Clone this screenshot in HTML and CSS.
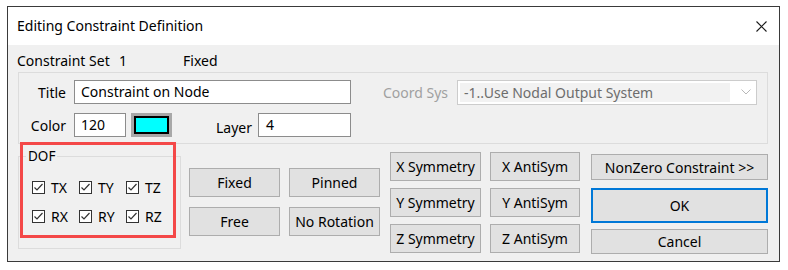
FILE: index.html
```html
<!DOCTYPE html>
<html>
<head>
<meta charset="utf-8">
<title>Editing Constraint Definition</title>
<link rel="stylesheet" href="styles.css">
</head>
<body>
<div class="window">
  <div class="titlebar">
    <span class="title">Editing Constraint Definition</span>
    <svg class="close" width="11" height="11" viewBox="0 0 11 11"><path d="M0.5 0.5L10.5 10.5M10.5 0.5L0.5 10.5" stroke="#1a1a1a" stroke-width="1.1" fill="none"/></svg>
  </div>
  <div class="body">
    <div class="header">
      <span class="h-label">Constraint Set</span>
      <span class="h-num">1</span>
      <span class="h-name">Fixed</span>
    </div>
    <div class="group-main">
      <div class="row">
        <span class="lbl">Title</span>
        <div class="input w-title">Constraint on Node</div>
        <span class="lbl-coord">Coord Sys</span>
        <div class="select">
          <div class="select-field">-1..Use Nodal Output System</div>
          <svg class="chev" width="10" height="6" viewBox="0 0 10 6"><path d="M0.5 0.5L5 5L9.5 0.5" stroke="#b8b8b8" stroke-width="1" fill="none"/></svg>
        </div>
      </div>
      <div class="row">
        <span class="lbl">Color</span>
        <div class="input w-color">120</div>
        <div class="swatch"><div class="swatch-in"></div></div>
        <span class="lbl-layer">Layer</span>
        <div class="input w-layer">4</div>
      </div>
    </div>
    <div class="lower">
      <fieldset class="dof">
        <legend>DOF</legend>
        <div class="cb-grid">
          <label class="cb"><svg width="13" height="13" viewBox="0 0 13 13"><rect x="0.5" y="0.5" width="12" height="12" fill="#fff" stroke="#333"/><path d="M2.5 6.5L5 9L10.5 3" stroke="#333" stroke-width="1.2" fill="none"/></svg><span>TX</span></label>
          <label class="cb"><svg width="13" height="13" viewBox="0 0 13 13"><rect x="0.5" y="0.5" width="12" height="12" fill="#fff" stroke="#333"/><path d="M2.5 6.5L5 9L10.5 3" stroke="#333" stroke-width="1.2" fill="none"/></svg><span>TY</span></label>
          <label class="cb"><svg width="13" height="13" viewBox="0 0 13 13"><rect x="0.5" y="0.5" width="12" height="12" fill="#fff" stroke="#333"/><path d="M2.5 6.5L5 9L10.5 3" stroke="#333" stroke-width="1.2" fill="none"/></svg><span>TZ</span></label>
          <label class="cb"><svg width="13" height="13" viewBox="0 0 13 13"><rect x="0.5" y="0.5" width="12" height="12" fill="#fff" stroke="#333"/><path d="M2.5 6.5L5 9L10.5 3" stroke="#333" stroke-width="1.2" fill="none"/></svg><span>RX</span></label>
          <label class="cb"><svg width="13" height="13" viewBox="0 0 13 13"><rect x="0.5" y="0.5" width="12" height="12" fill="#fff" stroke="#333"/><path d="M2.5 6.5L5 9L10.5 3" stroke="#333" stroke-width="1.2" fill="none"/></svg><span>RY</span></label>
          <label class="cb"><svg width="13" height="13" viewBox="0 0 13 13"><rect x="0.5" y="0.5" width="12" height="12" fill="#fff" stroke="#333"/><path d="M2.5 6.5L5 9L10.5 3" stroke="#333" stroke-width="1.2" fill="none"/></svg><span>RZ</span></label>
        </div>
      </fieldset>
      <div class="presets">
        <button class="btn">Fixed</button>
        <button class="btn">Pinned</button>
        <button class="btn">Free</button>
        <button class="btn">No Rotation</button>
      </div>
      <div class="sym">
        <button class="btn">X Symmetry</button>
        <button class="btn">X AntiSym</button>
        <button class="btn">Y Symmetry</button>
        <button class="btn">Y AntiSym</button>
        <button class="btn">Z Symmetry</button>
        <button class="btn">Z AntiSym</button>
      </div>
      <div class="actions">
        <button class="btn b-nonzero">NonZero Constraint &gt;&gt;</button>
        <button class="btn b-ok">OK</button>
        <button class="btn b-cancel">Cancel</button>
      </div>
      <div class="annot"></div>
    </div>
  </div>
</div>
</body>
</html>
```

FILE: styles.css
```css
* { box-sizing: border-box; }
html, body { margin: 0; padding: 0; }
body {
  background: #ffffff;
  font-family: "Noto Sans", "Open Sans", sans-serif;
  font-size: 14px;
  color: #000;
  width: 788px;
  height: 270px;
  overflow: hidden;
}
.window {
  margin: 6px 0 0 7px;
  width: 773px;
  height: 256px;
  border: 1px solid #3a3a3a;
  display: flex;
  flex-direction: column;
}
.titlebar {
  height: 38px;
  background: #fff;
  display: flex;
  align-items: center;
  padding-left: 9px;
  padding-right: 12px;
}
.title { flex: 1; font-size: 14px; line-height: 18px; }
.close { display: block; }
.body {
  flex: 1;
  background: #f0f0f0;
}
.header {
  height: 27px;
  padding: 4px 0 0 9px;
  display: flex;
  align-items: center;
  line-height: 23px;
}
.h-label { width: 102px; }
.h-num { width: 64px; }
.group-main {
  margin-left: 10px;
  width: 750px;
  height: 72px;
  border: 1px solid #dcdcdc;
  padding-top: 7px;
  display: flex;
  flex-direction: column;
  gap: 9px;
}
.row {
  display: flex;
  align-items: center;
  height: 24px;
}
.lbl {
  width: 55px;
  text-align: right;
  padding-right: 8px;
}
.input {
  height: 24px;
  background: #fff;
  border: 1px solid #8c8c8c;
  padding-left: 6px;
  line-height: 22px;
  white-space: nowrap;
}
.w-title { width: 277px; }
.w-color { width: 52px; }
.w-layer { width: 93px; padding-left: 7px; }
.lbl-coord {
  width: 106px;
  text-align: right;
  padding-right: 9px;
  color: #a0a0a0;
}
.select {
  width: 300px;
  height: 25px;
  border: 1px solid #cccccc;
  background: #fff;
  display: flex;
  align-items: center;
  padding: 2px;
}
.select-field {
  width: 270px;
  height: 19px;
  background: #f2f2f2;
  color: #6d6d6d;
  padding-left: 4px;
  line-height: 19px;
  white-space: nowrap;
}
.chev { margin-left: 11px; display: block; }
.swatch {
  margin-left: 5px;
  width: 41px;
  height: 24px;
  background: #a8a8a8;
  padding: 3px;
}
.swatch-in {
  width: 100%;
  height: 100%;
  background: #00ffff;
  border: 2px solid #000;
}
.lbl-layer {
  width: 86px;
  text-align: right;
  padding-right: 6px;
  position: relative;
  top: 2px;
}
.lower {
  position: relative;
  display: flex;
  align-items: flex-start;
  padding-left: 10px;
}
.dof {
  margin: 4px 0 0 0;
  width: 163px;
  border: 1px solid #dcdcdc;
  padding: 15px 0 23px 13px;
  min-width: 0;
}
.dof legend {
  padding: 0 2px;
  margin-left: -6px;
  line-height: 16px;
  font-size: 13.5px;
}
.cb-grid {
  display: grid;
  grid-template-columns: 47px 47px 47px;
  grid-auto-rows: 17px;
  row-gap: 12px;
}
.cb {
  display: flex;
  align-items: center;
  gap: 6px;
  line-height: 17px;
}
.cb svg { display: block; flex: none; }
.btn {
  font-family: inherit;
  font-size: 14px;
  color: #000;
  background: #e1e1e1;
  border: 1px solid #adadad;
  padding: 0;
  margin: 0;
  display: block;
}
.presets {
  margin: 24px 0 0 8px;
  display: grid;
  grid-template-columns: 91px 91px;
  grid-auto-rows: 29px;
  column-gap: 9px;
  row-gap: 10px;
}
.sym {
  margin: 8px 0 0 10px;
  display: grid;
  grid-template-columns: 91px 90px;
  grid-auto-rows: 29px;
  column-gap: 9px;
  row-gap: 7px;
}
.actions {
  margin: 10px 0 0 11px;
  width: 177px;
  display: flex;
  flex-direction: column;
}
.b-nonzero { height: 26px; }
.b-ok { height: 35px; margin-top: 8px; border: 2px solid #0078d7; }
.b-cancel { height: 25px; margin-top: 6px; }
.annot {
  position: absolute;
  left: 12px;
  top: -2px;
  width: 156px;
  height: 96px;
  border: 3px solid #f44848;
  pointer-events: none;
}
```
